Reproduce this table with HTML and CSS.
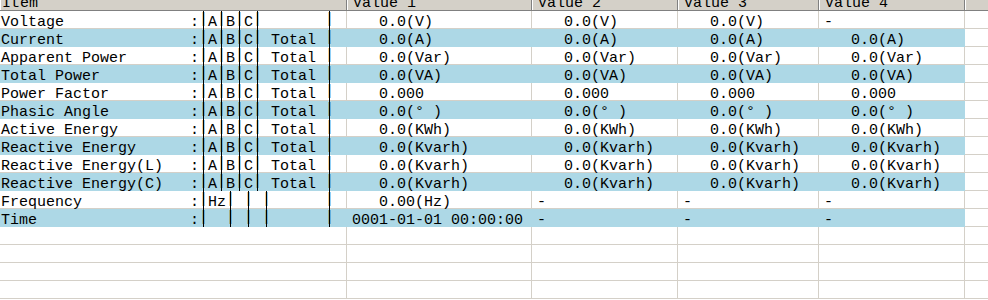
FILE: index.html
```html
<!DOCTYPE html>
<html>
<head>
<meta charset="utf-8">
<link rel="stylesheet" href="styles.css">
</head>
<body>
<div class="list">
  <div class="header">
    <div class="hcell first"><span class="htext">Item</span></div>
    <div class="hcell"><span class="htext">Value 1</span></div>
    <div class="hcell"><span class="htext">Value 2</span></div>
    <div class="hcell"><span class="htext">Value 3</span></div>
    <div class="hcell"><span class="htext">Value 4</span></div>
    <div class="hcell fill"></div>
  </div>

  <div class="row">
    <div class="cell item"><span class="name">Voltage</span>:<b class="bar">|</b>A<b class="bar">|</b>B<b class="bar">|</b>C<b class="bar">|</b>       <b class="bar">|</b></div>
    <div class="cell">   0.0(V)</div><div class="cell">   0.0(V)</div><div class="cell">   0.0(V)</div><div class="cell">-</div>
    <div class="cell fill"></div>
  </div>
  <div class="row alt">
    <div class="cell item"><span class="name">Current</span>:<b class="bar">|</b>A<b class="bar">|</b>B<b class="bar">|</b>C<b class="bar">|</b> Total <b class="bar">|</b></div>
    <div class="cell">   0.0(A)</div><div class="cell">   0.0(A)</div><div class="cell">   0.0(A)</div><div class="cell">   0.0(A)</div>
    <div class="cell fill"></div>
  </div>
  <div class="row">
    <div class="cell item"><span class="name">Apparent Power</span>:<b class="bar">|</b>A<b class="bar">|</b>B<b class="bar">|</b>C<b class="bar">|</b> Total <b class="bar">|</b></div>
    <div class="cell">   0.0(Var)</div><div class="cell">   0.0(Var)</div><div class="cell">   0.0(Var)</div><div class="cell">   0.0(Var)</div>
    <div class="cell fill"></div>
  </div>
  <div class="row alt">
    <div class="cell item"><span class="name">Total Power</span>:<b class="bar">|</b>A<b class="bar">|</b>B<b class="bar">|</b>C<b class="bar">|</b> Total <b class="bar">|</b></div>
    <div class="cell">   0.0(VA)</div><div class="cell">   0.0(VA)</div><div class="cell">   0.0(VA)</div><div class="cell">   0.0(VA)</div>
    <div class="cell fill"></div>
  </div>
  <div class="row">
    <div class="cell item"><span class="name">Power Factor</span>:<b class="bar">|</b>A<b class="bar">|</b>B<b class="bar">|</b>C<b class="bar">|</b> Total <b class="bar">|</b></div>
    <div class="cell">   0.000</div><div class="cell">   0.000</div><div class="cell">   0.000</div><div class="cell">   0.000</div>
    <div class="cell fill"></div>
  </div>
  <div class="row alt">
    <div class="cell item"><span class="name">Phasic Angle</span>:<b class="bar">|</b>A<b class="bar">|</b>B<b class="bar">|</b>C<b class="bar">|</b> Total <b class="bar">|</b></div>
    <div class="cell">   0.0(° )</div><div class="cell">   0.0(° )</div><div class="cell">   0.0(° )</div><div class="cell">   0.0(° )</div>
    <div class="cell fill"></div>
  </div>
  <div class="row">
    <div class="cell item"><span class="name">Active Energy</span>:<b class="bar">|</b>A<b class="bar">|</b>B<b class="bar">|</b>C<b class="bar">|</b> Total <b class="bar">|</b></div>
    <div class="cell">   0.0(KWh)</div><div class="cell">   0.0(KWh)</div><div class="cell">   0.0(KWh)</div><div class="cell">   0.0(KWh)</div>
    <div class="cell fill"></div>
  </div>
  <div class="row alt">
    <div class="cell item"><span class="name">Reactive Energy</span>:<b class="bar">|</b>A<b class="bar">|</b>B<b class="bar">|</b>C<b class="bar">|</b> Total <b class="bar">|</b></div>
    <div class="cell">   0.0(Kvarh)</div><div class="cell">   0.0(Kvarh)</div><div class="cell">   0.0(Kvarh)</div><div class="cell">   0.0(Kvarh)</div>
    <div class="cell fill"></div>
  </div>
  <div class="row">
    <div class="cell item"><span class="name">Reactive Energy(L)</span>:<b class="bar">|</b>A<b class="bar">|</b>B<b class="bar">|</b>C<b class="bar">|</b> Total <b class="bar">|</b></div>
    <div class="cell">   0.0(Kvarh)</div><div class="cell">   0.0(Kvarh)</div><div class="cell">   0.0(Kvarh)</div><div class="cell">   0.0(Kvarh)</div>
    <div class="cell fill"></div>
  </div>
  <div class="row alt">
    <div class="cell item"><span class="name">Reactive Energy(C)</span>:<b class="bar">|</b>A<b class="bar">|</b>B<b class="bar">|</b>C<b class="bar">|</b> Total <b class="bar">|</b></div>
    <div class="cell">   0.0(Kvarh)</div><div class="cell">   0.0(Kvarh)</div><div class="cell">   0.0(Kvarh)</div><div class="cell">   0.0(Kvarh)</div>
    <div class="cell fill"></div>
  </div>
  <div class="row">
    <div class="cell item"><span class="name">Frequency</span>:<b class="bar">|</b>Hz<b class="bar">|</b> <b class="bar">|</b> <b class="bar">|</b>      <b class="bar">|</b></div>
    <div class="cell">   0.00(Hz)</div><div class="cell">-</div><div class="cell">-</div><div class="cell">-</div>
    <div class="cell fill"></div>
  </div>
  <div class="row alt">
    <div class="cell item"><span class="name">Time</span>:<b class="bar">|</b>  <b class="bar">|</b> <b class="bar">|</b> <b class="bar">|</b>      <b class="bar">|</b></div>
    <div class="cell">0001-01-01 00:00:00</div><div class="cell">-</div><div class="cell">-</div><div class="cell">-</div>
    <div class="cell fill"></div>
  </div>

  <div class="row empty"><div class="cell"></div><div class="cell"></div><div class="cell"></div><div class="cell"></div><div class="cell"></div><div class="cell fill"></div></div>
  <div class="row empty"><div class="cell"></div><div class="cell"></div><div class="cell"></div><div class="cell"></div><div class="cell"></div><div class="cell fill"></div></div>
  <div class="row empty"><div class="cell"></div><div class="cell"></div><div class="cell"></div><div class="cell"></div><div class="cell"></div><div class="cell fill"></div></div>
  <div class="row empty"><div class="cell"></div><div class="cell"></div><div class="cell"></div><div class="cell"></div><div class="cell"></div><div class="cell fill"></div></div>
</div>
</body>
</html>
```

FILE: styles.css
```css
html, body {
  margin: 0;
  padding: 0;
  background: #ffffff;
}

.list {
  width: 988px;
  height: 300px;
  overflow: hidden;
  font-family: "Liberation Mono", "DejaVu Sans Mono", monospace;
  font-size: 15px;
  color: #000000;
}

.header,
.row {
  display: grid;
  grid-template-columns: 347px 185px 146px 141px 146px 1fr;
}

.header {
  height: 11px;
  background: #d4d0c8;
  border-bottom: 1px solid #808080;
  box-sizing: border-box;
  overflow: hidden;
}

.hcell {
  box-sizing: border-box;
  border-right: 1px solid #808080;
  box-shadow: inset 1px 0 0 #ffffff;
  padding-left: 6px;
  overflow: hidden;
  white-space: pre;
}

.hcell.first {
  padding-left: 2px;
}

.hcell.fill {
  border-right: none;
}

.htext {
  display: block;
  line-height: 18px;
  margin-top: -5px;
}

.row {
  height: 18px;
}

.cell {
  box-sizing: border-box;
  height: 18px;
  border-right: 1px solid #d4d0c8;
  border-bottom: 1px solid #d4d0c8;
  padding: 3px 0 0 5px;
  line-height: 17px;
  white-space: pre;
  overflow: visible;
}

.cell.item {
  padding-left: 1px;
}

.cell.fill {
  border-right: none;
  background: #ffffff;
}

.row.alt .cell {
  background: #add8e6;
  border-color: #add8e6;
}

.row.alt .cell.fill {
  background: #ffffff;
  border-color: #d4d0c8;
}

.name {
  display: inline-block;
  width: 189px;
}

.bar {
  display: inline-block;
  width: 9px;
  height: 18px;
  margin-top: -3px;
  vertical-align: top;
  font-weight: normal;
  line-height: 18px;
  overflow: hidden;
  background: linear-gradient(#000000, #000000) no-repeat 4px 0 / 1px 100%;
}
```
